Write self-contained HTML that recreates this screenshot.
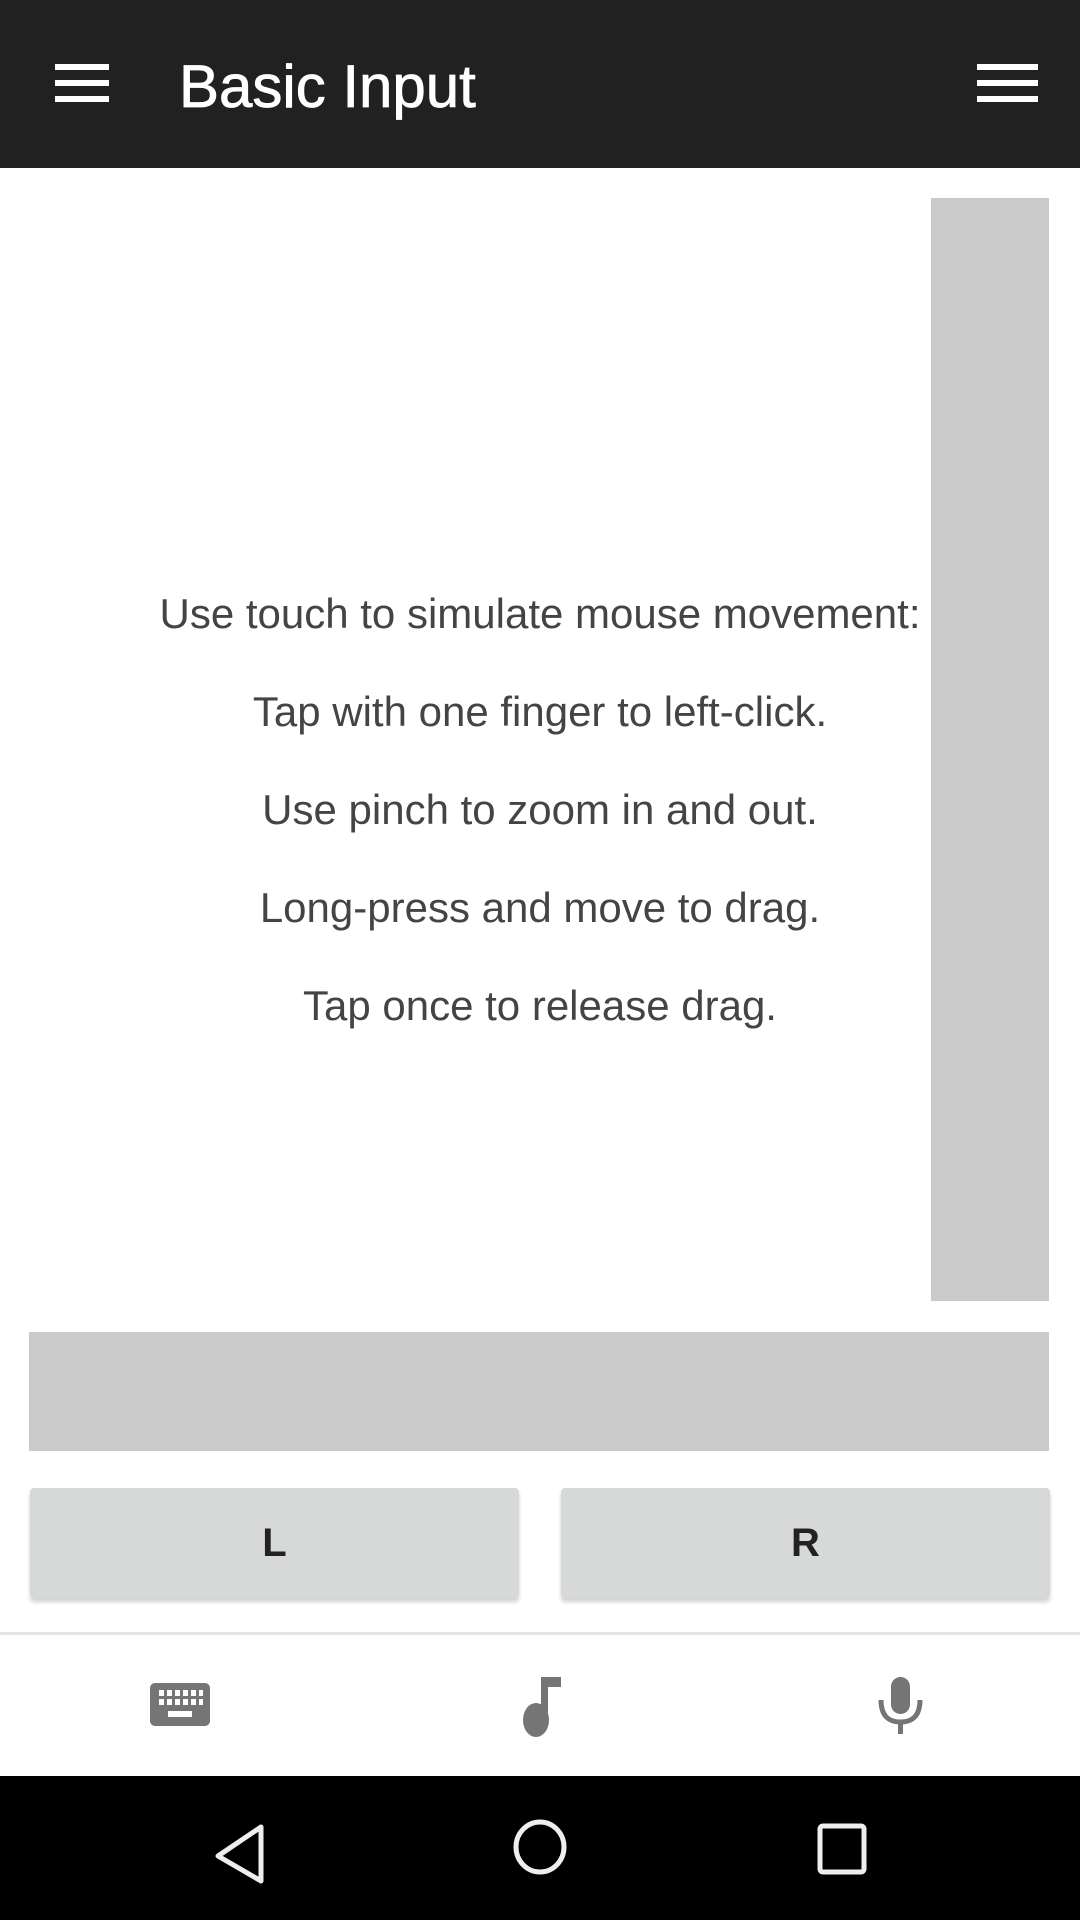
<!DOCTYPE html>
<html><head><meta charset="utf-8"><style>
*{margin:0;padding:0;box-sizing:border-box}
body{width:1080px;height:1920px;position:relative;background:#fff;font-family:"Liberation Sans",sans-serif;overflow:hidden}
.abs{position:absolute}
.bar{background:#212121;left:0;top:0;width:1080px;height:168px}
.hl{position:absolute;background:#fff;height:6px}
.t{position:absolute;left:0;width:1080px;text-align:center;font-size:42px;line-height:50px;color:#444}
.btn{position:absolute;top:1488px;height:110px;background:#d7d8d8;border-radius:4px;box-shadow:0 4px 4px rgba(0,0,0,0.18);font-size:40px;font-weight:bold;color:#222;text-align:center;line-height:110px}
</style></head><body>
<div class="abs bar"></div>
<div class="hl" style="left:55px;top:64px;width:54px"></div>
<div class="hl" style="left:55px;top:80px;width:54px"></div>
<div class="hl" style="left:55px;top:96px;width:54px"></div>
<div class="abs" style="left:179px;top:57px;font-size:60px;line-height:60px;color:#fff;-webkit-text-stroke:0.8px #fff">Basic Input</div>
<div class="hl" style="left:977px;top:64px;width:61px"></div>
<div class="hl" style="left:977px;top:80px;width:61px"></div>
<div class="hl" style="left:977px;top:96px;width:61px"></div>

<div class="abs" style="left:931px;top:198px;width:118px;height:1103px;background:#cacaca"></div>
<div class="t" style="top:589px">Use touch to simulate mouse movement:</div>
<div class="t" style="top:687px">Tap with one finger to left-click.</div>
<div class="t" style="top:785px">Use pinch to zoom in and out.</div>
<div class="t" style="top:883px">Long-press and move to drag.</div>
<div class="t" style="top:981px">Tap once to release drag.</div>

<div class="abs" style="left:29px;top:1332px;width:1020px;height:119px;background:#cacaca"></div>
<div class="btn" style="left:30px;width:489px">L</div>
<div class="btn" style="left:561px;width:489px">R</div>
<div class="abs" style="left:0;top:1632px;width:1080px;height:3px;background:#e4e4e4"></div>

<svg class="abs" style="left:0;top:1660px" width="1080" height="116">
 <rect x="150" y="23" width="60" height="43" rx="5" fill="#757575"/>
 <g fill="#fff">
  <rect x="159" y="30" width="5" height="6"/><rect x="167" y="30" width="5" height="6"/><rect x="175" y="30" width="5" height="6"/><rect x="183" y="30" width="5" height="6"/><rect x="191" y="30" width="5" height="6"/><rect x="199" y="30" width="4" height="6"/>
  <rect x="159" y="39" width="5" height="6"/><rect x="167" y="39" width="5" height="6"/><rect x="175" y="39" width="5" height="6"/><rect x="183" y="39" width="5" height="6"/><rect x="191" y="39" width="5" height="6"/><rect x="199" y="39" width="4" height="6"/>
  <rect x="168" y="51" width="24" height="6"/>
 </g>
 <rect x="541" y="17" width="20" height="10" fill="#757575"/>
 <rect x="541" y="17" width="7" height="46" fill="#757575"/>
 <ellipse cx="536" cy="60" rx="13" ry="17" fill="#757575"/>
 <rect x="891" y="17" width="19" height="37" rx="9.5" fill="#757575"/>
 <path d="M881 40 Q881 62 900.5 62 Q920 62 920 40" fill="none" stroke="#757575" stroke-width="5"/>
 <rect x="898" y="62" width="5" height="12" fill="#757575"/>
</svg>

<div class="abs" style="left:0;top:1776px;width:1080px;height:144px;background:#000"></div>
<svg class="abs" style="left:0;top:1776px" width="1080" height="144">
 <path d="M261 105 L261 51 L218 80 Z" fill="none" stroke="#eee" stroke-width="5" stroke-linejoin="round"/>
 <ellipse cx="540" cy="71" rx="24" ry="25" fill="none" stroke="#eee" stroke-width="5"/>
 <rect x="820" y="50" width="44" height="46" rx="3" fill="none" stroke="#eee" stroke-width="5"/>
</svg>
</body></html>
